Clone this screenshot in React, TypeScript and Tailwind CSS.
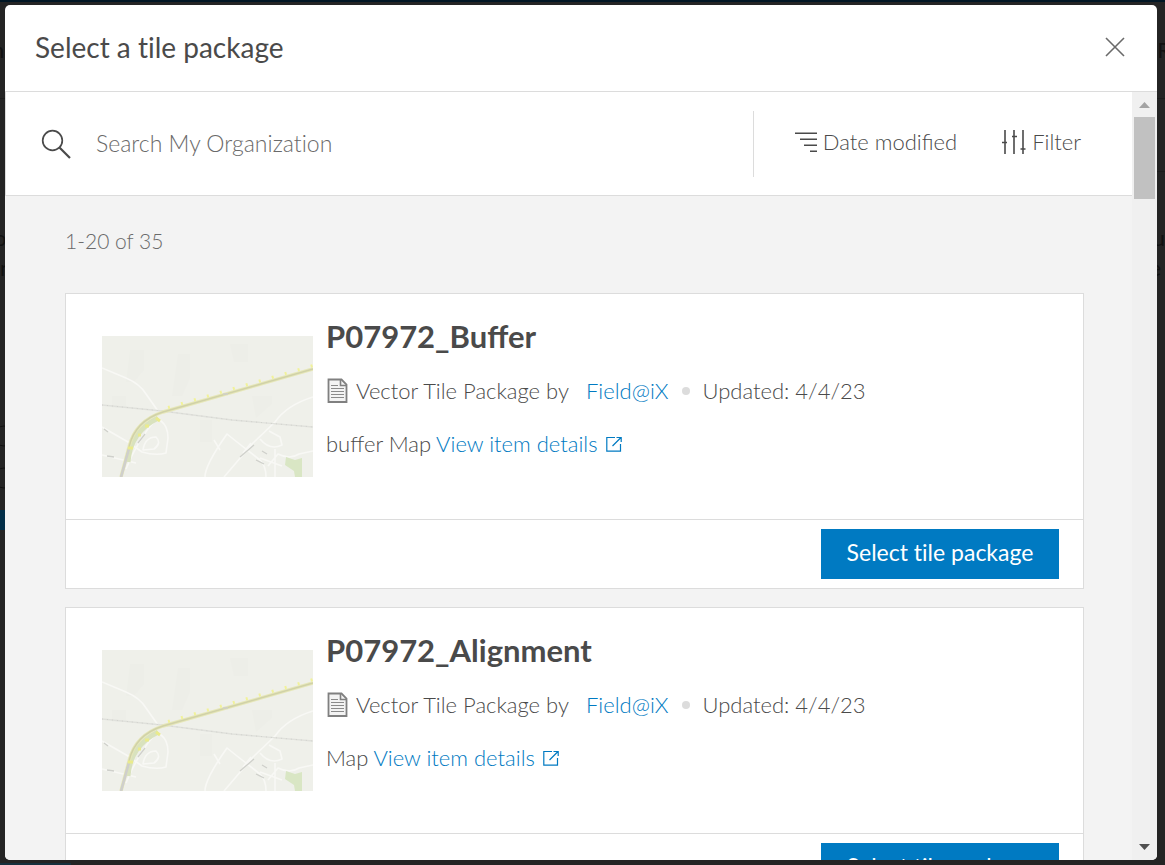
import { useState } from "react";

type TilePackage = {
  id: string;
  title: string;
  owner: string;
  updated: string;
  summary: string;
};

const packages: TilePackage[] = [
  { id: "buffer", title: "P07972_Buffer", owner: "Field@iX", updated: "4/4/23", summary: "buffer Map" },
  { id: "alignment", title: "P07972_Alignment", owner: "Field@iX", updated: "4/4/23", summary: "Map" },
];

function MapThumbnail() {
  return (
    <svg viewBox="0 0 211 141" className="h-[141px] w-[211px] shrink-0" aria-hidden="true">
      <rect width="211" height="141" fill="#eff0ea" />
      <g fill="#edeee8">
        <path d="M28 14h14v20l-10 12h-8zM76 18h12v24l-8 18h-10zM128 8h18v18h-14zM150 60h20v8l-16 14zM10 60h14v12H10zM98 84h12v22H98z" />
      </g>
      <g fill="none" stroke="#f8f8f5" strokeWidth="1.6" strokeLinejoin="round">
        <path d="M0 32l24 10q14 6 20 16l12 17" />
        <path d="M0 91l26 15 14 10q14 4 24 1l2-15q0-12-7-17l-6-5" />
        <path d="M0 119l34 8M24 133q12-30 31-51M41 114q2-13 13-13 6 6-2 12z" />
        <path d="M211 61q-26 8-38 25l-22 21-29 34M103 141q0-12 22-43l10 8 23 18q6 6 6 17M112 104l6 10" />
        <path d="M158 103q10 12 22 6l-2-8-11-6M141 117l8-10M158 122l22 8M166 130l10-12q12 6 21 0l14-3M173 141v-28" />
      </g>
      <path d="M184 121l9 3 7-2v19h-7l-1-6-9-6z" fill="#d9e6c4" />
      <path d="M0 69l60 6 70 9 81 7" fill="none" stroke="#e0e1dc" strokeWidth="1.4" />
      <path d="M0 69l60 6 70 9 81 7" fill="none" stroke="#d2d3ce" strokeWidth="1" strokeDasharray="1 4" />
      <path d="M26 126q2-30 30-44" fill="none" stroke="#d9e2be" strokeWidth="5" />
      <path d="M19 141l8-30q6-26 34-35l150-43" fill="none" stroke="#e6e7b8" strokeWidth="3.4" />
      <path d="M19 141l8-30q6-26 34-35l150-43" fill="none" stroke="#d0d1a8" strokeWidth="1.4" />
      <path d="M19 141l8-28" stroke="#cfcfcc" strokeWidth="2.6" />
      <path d="M66 71.500L211 29.500" stroke="#f1f29a" strokeWidth="3" strokeDasharray="2 11.500" />
      <path d="M26 112h5M36 99h3M43 90h4M54 82l4 3" stroke="#eaeb8c" strokeWidth="3" />
      <g stroke="#cfd0cb" strokeWidth="1.3">
        <path d="M121 58h5M2 93l4 3M5 120l7 1M36 107l7-9M138 121l14-12M160 115l5 3M154 124l8 4" />
      </g>
    </svg>
  );
}

function SearchIcon() {
  return (
    <svg viewBox="0 0 32 32" className="size-8 shrink-0" fill="none" stroke="#4a4a4a" aria-hidden="true">
      <circle cx="12.5" cy="12.5" r="9.8" strokeWidth="1.7" />
      <path d="M19.5 19.5L30 30" strokeWidth="2.2" />
    </svg>
  );
}

function SortIcon() {
  return (
    <svg viewBox="0 0 22 22" className="size-[22px]" fill="none" stroke="#4a4a4a" strokeWidth="1.5" aria-hidden="true">
      <path d="M0 2.2h22M5 8.2h17M9 14.2h13M15 20.2h7" />
    </svg>
  );
}

function FilterIcon() {
  return (
    <svg viewBox="0 0 24 24" className="size-6" fill="none" stroke="#4a4a4a" strokeWidth="1.6" aria-hidden="true">
      <path d="M3 0v24M12 0v24M21 0v24M0 12.5h5M10 6.5h5M18.5 19h5" />
    </svg>
  );
}

function DocumentIcon() {
  return (
    <svg viewBox="0 0 22 26" className="h-[26px] w-[22px]" fill="none" aria-hidden="true">
      <path d="M2.500 1.500h13l5 5V24h-18z" fill="#f3f3f3" stroke="#808080" strokeWidth="1.8" />
      <path d="M14.500 1.500V7.500H20" stroke="#808080" strokeWidth="1.6" />
      <path d="M5 7.500h7M5 10.500h13M5 13.500h13M5 16.500h13M5 19.500h13" stroke="#8a8a8a" strokeWidth="1.2" />
    </svg>
  );
}

function LaunchIcon() {
  return (
    <svg viewBox="0 0 16 16" className="size-4" fill="none" stroke="#007ac2" strokeWidth="1.2" aria-hidden="true">
      <path d="M9 1.500H.8v13.700h13.700V8M10.500 1.500h4.700V6M15 1.500L6.500 10" />
    </svg>
  );
}

function PackageCard({ item }: { item: TilePackage }) {
  return (
    <article className="border border-[#dcdcdc] bg-white">
      <div className="flex h-[225px] gap-[13px] pl-9">
        <div className="pt-[42px]">
          <MapThumbnail />
        </div>
        <div className="min-w-0 pt-6 text-[22px] leading-8 font-light">
          <h2 className="text-[31px] leading-9 font-bold">{item.title}</h2>
          <p className="mt-[21px] flex items-center whitespace-nowrap">
            <DocumentIcon />
            <span className="ml-2">Vector Tile Package by</span>
            <a href="#owner" className="ml-[17px] text-[#007ac2]">{item.owner}</a>
            <span className="mx-[13px] size-2 rounded-full bg-[#dcdcdc]" />
            <span>Updated: {item.updated}</span>
          </p>
          <p className="mt-[21px] flex items-center gap-[5px]">
            {item.summary}
            <a href="#details" className="flex items-center gap-2 text-[#007ac2]">
              View item details
              <LaunchIcon />
            </a>
          </p>
        </div>
      </div>
      <div className="flex justify-end border-t border-[#dcdcdc] py-[9px] pr-6">
        <button type="button" className="h-[50px] w-[238px] bg-[#007ac2] pb-1 text-[23px] text-white [font-variant-ligatures:none]">
          Select tile package
        </button>
      </div>
    </article>
  );
}

function Scrollbar() {
  return (
    <div className="flex w-[25px] shrink-0 flex-col items-center bg-[#f0f0f0]" aria-hidden="true">
      <svg viewBox="0 0 25 25" className="size-[25px]" fill="#a3a3a3">
        <path d="M7 16h11l-5.500-6z" />
      </svg>
      <div className="h-[82px] w-[21px] bg-[#c1c1c1]" />
      <svg viewBox="0 0 25 25" className="mt-auto size-[25px]" fill="#505050">
        <path d="M7 9h11l-5.500 6z" />
      </svg>
    </div>
  );
}

// The dimmed page behind the dialog, of which only the edges show.
function Backdrop() {
  return (
    <div className="absolute inset-0 overflow-hidden text-[22px] leading-8 text-[#111]" aria-hidden="true">
      <div className="absolute inset-x-0 top-24 h-px bg-[#1c1c1c]" />
      <div className="absolute top-[169px] right-0 h-px w-4 bg-[#1c1c1c]" />
      <div className="absolute top-[508px] left-0 h-5 w-4 bg-[#012d47]" />
      <div className="absolute bottom-0 left-0 h-0.5 w-[71px] bg-[#17303d]" />
      <span className="absolute top-8 -left-2">n</span>
      <span className="absolute top-[220px] -left-1.5">o</span>
      <span className="absolute top-[250px] left-0">n</span>
      <span className="absolute top-8 -right-1.5">R</span>
      <span className="absolute top-[220px] right-0">u</span>
      <span className="absolute top-[250px] right-1">e</span>
      <svg viewBox="0 0 16 100" className="absolute top-[406px] left-0 h-[100px] w-4" fill="none" stroke="#111">
        <circle cx="4" cy="28" r="10" />
        <circle cx="4" cy="70" r="10" />
      </svg>
    </div>
  );
}

export default function App() {
  const [query, setQuery] = useState("");

  return (
    <div className="relative h-screen border-t-2 border-[#011624] bg-[#242424] pt-[3px] pr-2 pb-[5px] pl-[5px] font-[Lato,sans-serif] text-[#4a4a4a]">
      <Backdrop />
      <div role="dialog" aria-labelledby="dialog-title" className="relative flex h-full flex-col overflow-hidden rounded-[5px] bg-white">
        <header className="flex h-[87px] shrink-0 items-center justify-between border-b border-[#dcdcdc] pr-8 pb-0.5 pl-[30px]">
          <h1 id="dialog-title" className="text-[28px] [font-variant-ligatures:none]">Select a tile package</h1>
          <button type="button" aria-label="Close">
            <svg viewBox="0 0 20 20" className="size-5" stroke="#6a6a6a" strokeWidth="1.6" aria-hidden="true">
              <path d="M1 1l18 18M19 1L1 19" />
            </svg>
          </button>
        </header>

        <div className="flex min-h-0 flex-1">
          <div className="min-w-0 flex-1 overflow-y-auto bg-[#f3f3f3] [scrollbar-width:none]">
            <div className="flex h-[104px] items-center border-b border-l border-[#dcdcdc] bg-white pl-[34px] text-[22px] font-light">
              <SearchIcon />
              <input
                type="text"
                aria-label="Search My Organization"
                placeholder="Search My Organization"
                value={query}
                onChange={(e) => setQuery(e.target.value)}
                className="ml-6 min-w-0 flex-1 text-[23px] outline-none [font-variant-ligatures:none] placeholder:text-[#6a6a6a]"
              />
              <div className="flex h-[66px] items-center gap-[45px] border-l border-[#dcdcdc] pr-[51px] pb-1 pl-[41px]">
                <button type="button" className="flex items-center gap-1.5">
                  <SortIcon />
                  Date modified
                </button>
                <button type="button" className="flex items-center gap-1.5">
                  <FilterIcon />
                  Filter
                </button>
              </div>
            </div>

            <div className="pr-12 pb-12 pl-[60px]">
              <p className="flex h-[97px] items-center pb-2 text-[21px] font-light text-[#6a6a6a]">1-20 of 35</p>
              <div className="flex flex-col gap-[18px]">
                {packages.map((item) => (
                  <PackageCard key={item.id} item={item} />
                ))}
              </div>
            </div>
          </div>
          <Scrollbar />
        </div>
      </div>
    </div>
  );
}
